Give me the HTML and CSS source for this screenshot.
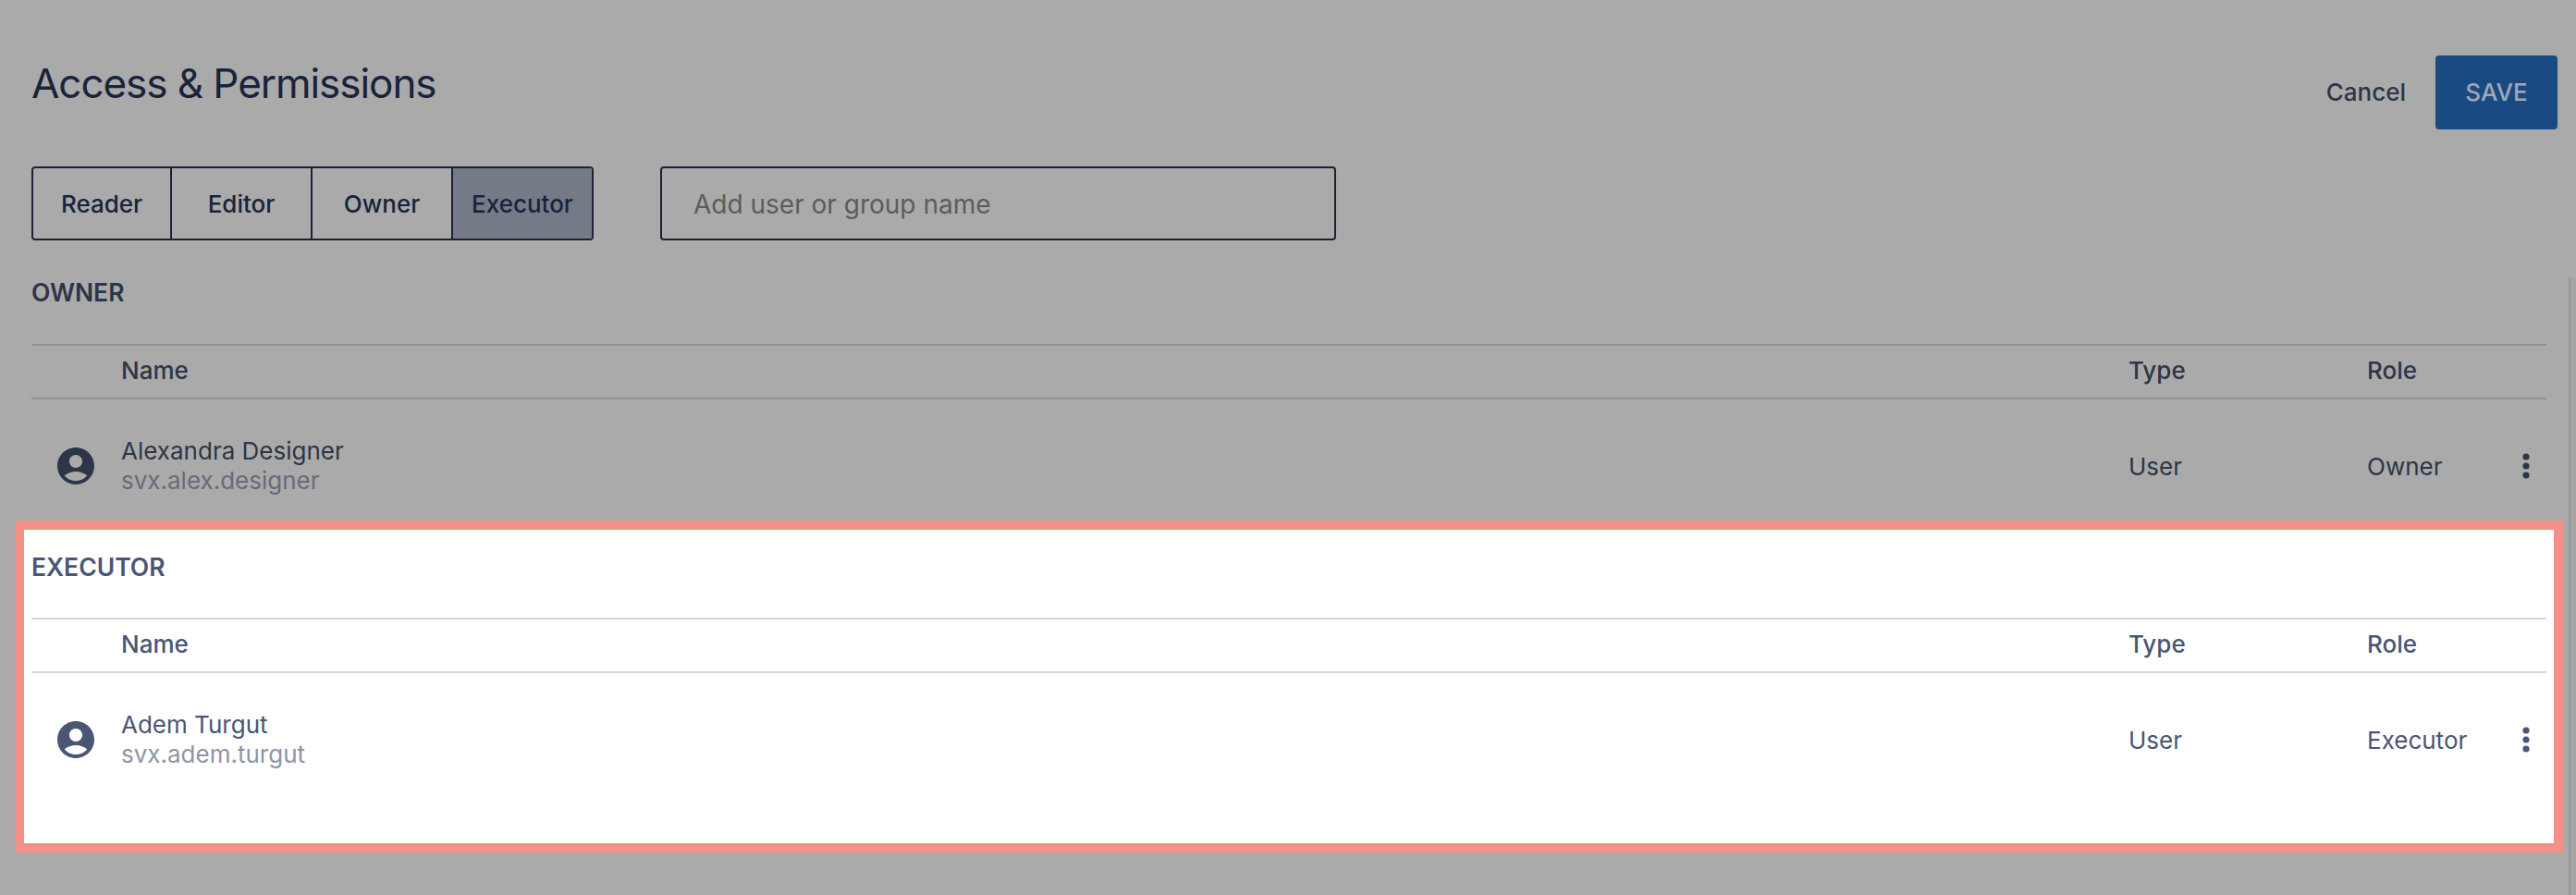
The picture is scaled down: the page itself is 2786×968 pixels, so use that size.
FILE: index.html
```html
<!DOCTYPE html>
<html lang="en">
<head>
<meta charset="utf-8">
<title>Access &amp; Permissions</title>
<link rel="stylesheet" href="styles.css">
</head>
<body>
<main class="page">
  <header class="header">
    <h1 class="title">Access &amp; Permissions</h1>
    <div class="actions">
      <button class="cancel" type="button">Cancel</button>
      <button class="save" type="button">SAVE</button>
    </div>
  </header>
  <div class="toolbar">
    <div class="tabs">
      <div class="tab">Reader</div>
      <div class="tab">Editor</div>
      <div class="tab">Owner</div>
      <div class="tab tab-active">Executor</div>
    </div>
    <div class="search">Add user or group name</div>
  </div>
  <section class="group group-dim">
    <h2 class="group-title">OWNER</h2>
    <div class="table-row table-head">
      <span></span><span>Name</span><span>Type</span><span>Role</span><span></span>
    </div>
    <div class="table-row table-body">
      <svg class="avatar" viewBox="2 2 20 20"><path d="M12 2C6.48 2 2 6.48 2 12s4.48 10 10 10 10-4.48 10-10S17.52 2 12 2zm0 4c1.93 0 3.5 1.57 3.5 3.5S13.93 13 12 13s-3.5-1.57-3.5-3.5S10.07 6 12 6zm0 14c-2.03 0-4.43-.82-6.14-2.88C7.55 15.8 9.68 15 12 15s4.45.8 6.14 2.12C16.43 19.18 14.03 20 12 20z"/></svg>
      <div class="person"><div class="person-name">Alexandra Designer</div><div class="person-id">svx.alex.designer</div></div>
      <span>User</span>
      <span>Owner</span>
      <svg class="kebab" viewBox="0 0 8 28"><circle cx="4" cy="4" r="3.6"/><circle cx="4" cy="14" r="3.6"/><circle cx="4" cy="24" r="3.6"/></svg>
    </div>
  </section>
  <section class="group group-highlight">
    <h2 class="group-title">EXECUTOR</h2>
    <div class="table-row table-head">
      <span></span><span>Name</span><span>Type</span><span>Role</span><span></span>
    </div>
    <div class="table-row table-body">
      <svg class="avatar" viewBox="2 2 20 20"><path d="M12 2C6.48 2 2 6.48 2 12s4.48 10 10 10 10-4.48 10-10S17.52 2 12 2zm0 4c1.93 0 3.5 1.57 3.5 3.5S13.93 13 12 13s-3.5-1.57-3.5-3.5S10.07 6 12 6zm0 14c-2.03 0-4.43-.82-6.14-2.88C7.55 15.8 9.68 15 12 15s4.45.8 6.14 2.12C16.43 19.18 14.03 20 12 20z"/></svg>
      <div class="person"><div class="person-name">Adem Turgut</div><div class="person-id">svx.adem.turgut</div></div>
      <span>User</span>
      <span>Executor</span>
      <svg class="kebab" viewBox="0 0 8 28"><circle cx="4" cy="4" r="3.6"/><circle cx="4" cy="14" r="3.6"/><circle cx="4" cy="24" r="3.6"/></svg>
    </div>
  </section>
  <div class="scrollbar"></div>
</main>
</body>
</html>
```
FILE: styles.css
```css
* { box-sizing: border-box; }
html, body { margin: 0; height: 100%; }
body {
  background: #aaaaaa;
  font-family: Inter, "Liberation Sans", sans-serif;
  overflow: hidden;
}
.page { position: relative; width: 2786px; height: 968px; }

.header {
  display: flex;
  justify-content: space-between;
  align-items: flex-start;
  padding: 60px 20px 0 34px;
}
.title {
  margin: 0;
  font-size: 44px;
  line-height: 60px;
  font-weight: 400;
  letter-spacing: -1.05px;
  color: #19233b;
}
.actions { display: flex; align-items: center; gap: 32px; }
.cancel {
  padding: 0;
  border: 0;
  background: none;
  font: 500 26px/40px Inter, sans-serif;
  color: #2d3548;
}
.save {
  width: 132px;
  height: 80px;
  padding: 0;
  border: 0;
  border-radius: 4px;
  background: #1a4a82;
  font: 500 26px/40px Inter, sans-serif;
  color: #a0a8b5;
}

.toolbar {
  display: flex;
  gap: 72px;
  margin: 40px 0 0 34px;
}
.tabs {
  display: flex;
  width: 608px;
  height: 80px;
  border: 2px solid #1a2238;
  border-radius: 4px;
  overflow: hidden;
}
.tab {
  width: 152px;
  display: flex;
  align-items: center;
  justify-content: center;
  font-size: 26px;
  font-weight: 500;
  color: #19233b;
  border-right: 2px solid #1a2238;
}
.tab:first-child { width: 150px; }
.tab:last-child { width: 150px; border-right: 0; }
.tab-active { background: #757a87; }
.search {
  display: flex;
  align-items: center;
  width: 731px;
  height: 80px;
  padding: 2px 0 0 34px;
  border: 2px solid #1a2238;
  border-radius: 4px;
  font-size: 28px;
  color: #5c5c5c;
}

.group-dim {
  --heading: #2d3548;
  --muted: #666c78;
  --rule: #919296;
  margin: 0 32px 0 34px;
}
.group-highlight {
  --heading: #4a5674;
  --muted: #8e95a6;
  --rule: #d2d6e3;
  margin: 0 14px 0 16px;
  padding: 20px 8px 0;
  border: 10px solid #f39186;
  background: #ffffff;
}
.group-title {
  margin: 0 0 36px;
  font-size: 26.5px;
  line-height: 40px;
  font-weight: 600;
  color: var(--heading);
}
.group-dim .group-title { margin-top: 36px; }
.group-highlight .group-title { margin-bottom: 35px; }

.table-row {
  display: grid;
  grid-template-columns: 97px 2171px 258px 1fr 44px;
  align-items: center;
  font-size: 26px;
  color: var(--heading);
}
.table-head {
  height: 60px;
  padding-bottom: 3px;
  border-top: 2px solid var(--rule);
  border-bottom: 2px solid var(--rule);
  font-weight: 500;
}
.table-body { padding: 40px 0 27px; }
.group-highlight .table-body { padding-bottom: 80px; }
.avatar {
  display: block;
  width: 40px;
  height: 40px;
  margin-left: 28px;
  fill: var(--heading);
}
.person { height: 64px; }
.person-name { font-size: 26px; line-height: 32px; }
.person-id { font-size: 26px; line-height: 32px; color: var(--muted); }
.kebab {
  display: block;
  justify-self: center;
  width: 8px;
  height: 28px;
  fill: var(--heading);
}

.scrollbar {
  position: absolute;
  top: 300px;
  right: 0;
  bottom: 0;
  width: 8px;
  background: #a6a6a6;
  border-left: 2px solid #999999;
}
```
